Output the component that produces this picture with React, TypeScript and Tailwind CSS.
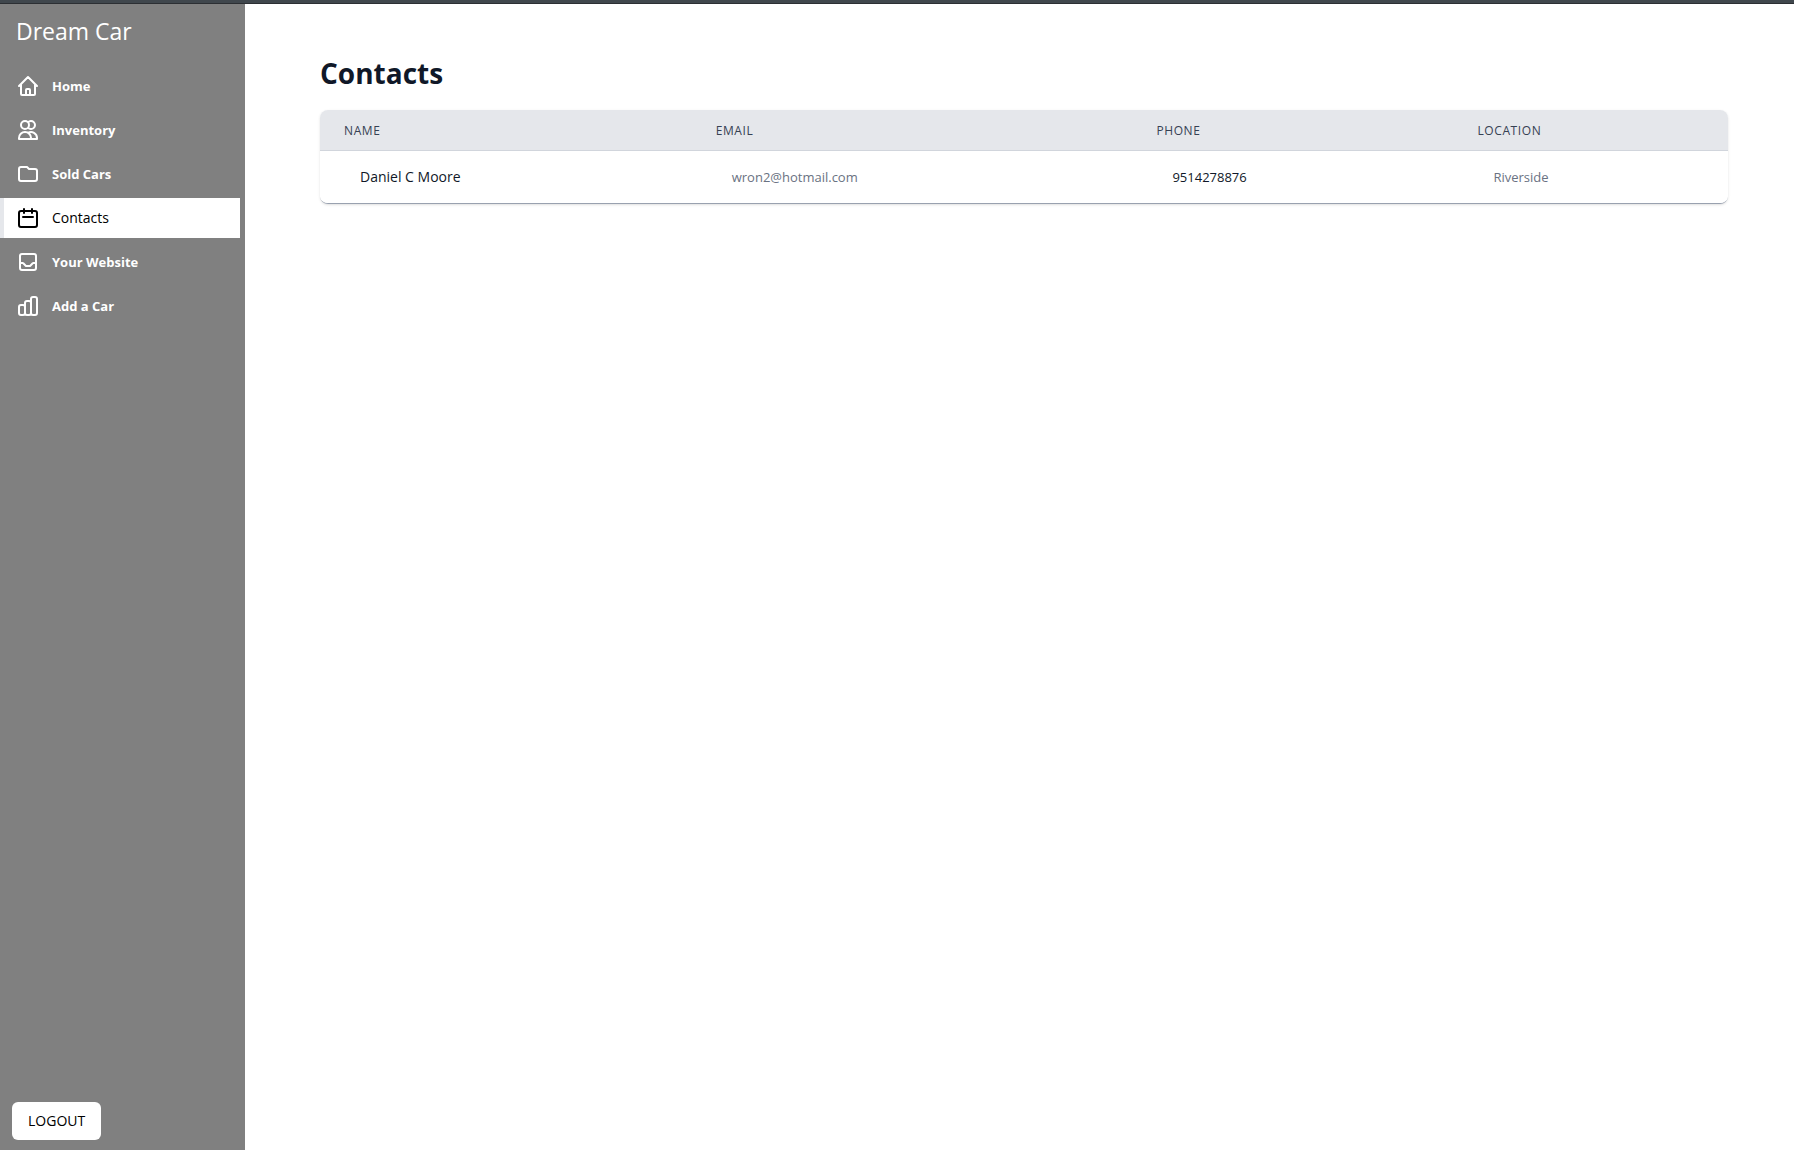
import React from "react";

const navigation = [
  { name: "Home", path: "M3 12l2-2m0 0l7-7 7 7M5 10v10a1 1 0 001 1h3m10-11l2 2m-2-2v10a1 1 0 01-1 1h-3m-6 0a1 1 0 001-1v-4a1 1 0 011-1h2a1 1 0 011 1v4a1 1 0 001 1m-6 0h6" },
  { name: "Inventory", path: "M12 4.354a4 4 0 110 5.292M15 21H3v-1a6 6 0 0112 0v1zm0 0h6v-1a6 6 0 00-9-5.197M13 7a4 4 0 11-8 0 4 4 0 018 0z" },
  { name: "Sold Cars", path: "M3 7v10a2 2 0 002 2h14a2 2 0 002-2V9a2 2 0 00-2-2h-6l-2-2H5a2 2 0 00-2 2z" },
  { name: "Contacts", current: true, path: "M8 7V3m8 4V3m-9 8h10M5 21h14a2 2 0 002-2V7a2 2 0 00-2-2H5a2 2 0 00-2 2v12a2 2 0 002 2z" },
  { name: "Your Website", path: "M20 13V6a2 2 0 00-2-2H6a2 2 0 00-2 2v7m16 0v5a2 2 0 01-2 2H6a2 2 0 01-2-2v-5m16 0h-2.586a1 1 0 00-.707.293l-2.414 2.414a1 1 0 01-.707.293h-3.172a1 1 0 01-.707-.293l-2.414-2.414A1 1 0 006.586 13H4" },
  { name: "Add a Car", path: "M9 19v-6a2 2 0 00-2-2H5a2 2 0 00-2 2v6a2 2 0 002 2h2a2 2 0 002-2zm0 0V9a2 2 0 012-2h2a2 2 0 012 2v10m-6 0a2 2 0 002 2h2a2 2 0 002-2m0 0V5a2 2 0 012-2h2a2 2 0 012 2v14a2 2 0 01-2 2h-2a2 2 0 01-2-2z" },
];

const contacts = [
  { name: "Daniel C Moore", email: "wron2@hotmail.com", phone: "9514278876", location: "Riverside" },
];

function Sidebar() {
  return (
    <aside className="flex w-[245px] shrink-0 flex-col bg-[#808080] pb-2.5">
      <p className="px-4 pt-[11px] text-[23px] leading-8 text-white">Dream Car</p>
      <nav className="mt-[19px] flex flex-col gap-1 pr-[5px]">
        {navigation.map((item) => (
          <a
            key={item.name}
            href="#"
            aria-current={item.current ? "page" : undefined}
            className={
              item.current
                ? "flex h-10 items-center gap-3 border-l-4 border-gray-200 bg-white pl-3 text-sm font-medium text-black"
                : "flex h-10 items-center gap-3 border-l-4 border-transparent pl-3 text-[13px] leading-5 font-bold text-white"
            }
          >
            <svg className="size-6" viewBox="0 0 24 24" fill="none" stroke="currentColor" strokeWidth={2} strokeLinecap="round" strokeLinejoin="round" aria-hidden="true">
              <path d={item.path} />
            </svg>
            {item.name}
          </a>
        ))}
      </nav>
      <button type="button" className="mt-auto ml-3 self-start rounded-md bg-white px-4 py-[9px] text-sm font-medium text-black">
        LOGOUT
      </button>
    </aside>
  );
}

function ContactsTable() {
  return (
    <div className="mt-[19px] overflow-hidden rounded-lg border-b border-gray-400 shadow">
      <table className="w-full table-fixed text-left">
        <colgroup>
          <col className="w-[26.4%]" />
          <col className="w-[31.3%]" />
          <col className="w-[22.8%]" />
          <col />
        </colgroup>
        <thead className="border-b border-gray-300 bg-gray-200">
          <tr className="text-xs tracking-wider text-gray-700 uppercase">
            <th scope="col" className="px-6 pt-[13px] pb-[11px] font-medium">Name</th>
            <th scope="col" className="px-6 pt-[13px] pb-[11px] font-medium">Email</th>
            <th scope="col" className="px-6 pt-[13px] pb-[11px] font-medium">Phone</th>
            <th scope="col" className="px-6 pt-[13px] pb-[11px] font-medium">Location</th>
          </tr>
        </thead>
        <tbody className="bg-white">
          {contacts.map((contact) => (
            <tr key={contact.email} className="text-[13px] leading-5 text-gray-500">
              <td className="px-10 py-4 text-sm font-medium text-gray-900">{contact.name}</td>
              <td className="px-10 py-4">{contact.email}</td>
              <td className="px-10 py-4 font-medium text-gray-900">{contact.phone}</td>
              <td className="px-10 py-4">{contact.location}</td>
            </tr>
          ))}
        </tbody>
      </table>
    </div>
  );
}

export default function App() {
  return (
    <div className="flex min-h-screen flex-col bg-white font-['Open_Sans','Noto_Sans',sans-serif]">
      <div className="h-1 border-b border-[#2c2f33] bg-[#40474d]" />
      <div className="flex flex-1">
        <Sidebar />
        <main className="min-w-0 flex-1 pt-[51px] pr-[66px] pl-[75px]">
          <h1 className="text-[28px] leading-9 font-bold text-gray-900">Contacts</h1>
          <ContactsTable />
        </main>
      </div>
    </div>
  );
}
